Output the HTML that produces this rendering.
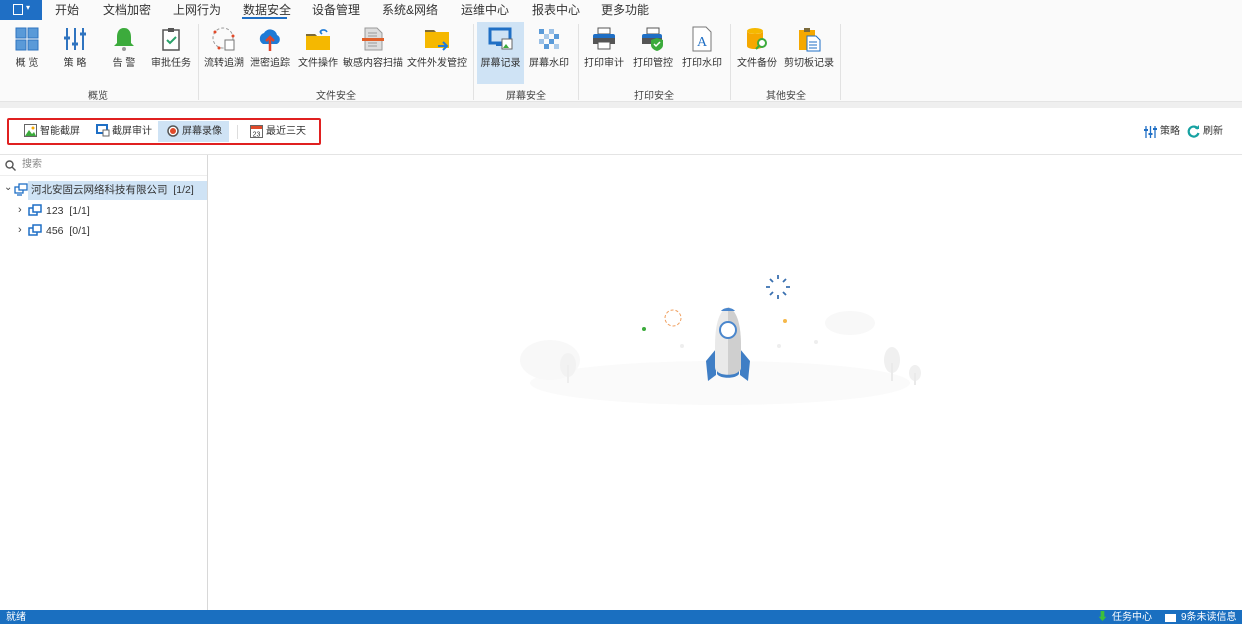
<!DOCTYPE html><html><head><meta charset="utf-8"><style>
*{margin:0;padding:0;box-sizing:border-box}
body{width:1242px;height:624px;overflow:hidden;background:#fff;font-family:"Liberation Sans","Noto Sans CJK SC",sans-serif;font-size:12px;line-height:1.2;color:#333;position:relative}
.a{position:absolute}
.tab{position:absolute;top:3px;font-size:12px;color:#333}
.it{position:absolute;top:22px;height:62px;text-align:center;font-size:10px;color:#333}
.it .ic{position:absolute;top:4px;left:50%;margin-left:-13px;width:26px;height:26px}
.it span{position:absolute;top:36px;left:0;right:0;white-space:nowrap}
.gl{position:absolute;top:91px;font-size:10px;line-height:12px;color:#444;z-index:2}
.sep{position:absolute;top:24px;width:1px;height:76px;background:#e2e2e2}
.tb{position:absolute;top:123px;font-size:10px;color:#333;height:18px;line-height:18px}
</style></head><body>
<div class="a" style="left:0;top:0;width:1242px;height:101px;background:#fafafa"></div>
<div class="a" style="left:0;top:0;width:42px;height:20px;background:#1f6fc5"></div>
<div class="a" style="left:13px;top:4px;width:10px;height:11px;border:1.5px solid #fff"></div>
<div class="a" style="left:26px;top:3px;color:#fff;font-size:8px">▾</div>
<div class="tab" style="left:55px">开始</div><div class="tab" style="left:103px">文档加密</div><div class="tab" style="left:173px">上网行为</div>
<div class="tab" style="left:243px">数据安全</div><div class="a" style="left:242px;top:17px;width:45px;height:2px;background:#1f6fc5"></div>
<div class="tab" style="left:312px">设备管理</div><div class="tab" style="left:382px">系统&amp;网络</div><div class="tab" style="left:461px">运维中心</div><div class="tab" style="left:532px">报表中心</div><div class="tab" style="left:601px">更多功能</div>
<div class="a" style="left:477px;top:22px;width:47px;height:62px;background:#cfe3f5"></div>
<div class="it" style="left:7px;width:40px"><svg class="ic" viewBox="0 0 26 26"><g fill="#5a9ad8" stroke="#2f74c0"><rect x="2" y="2" width="10" height="10"/><rect x="14" y="2" width="10" height="10"/><rect x="2" y="14" width="10" height="10"/><rect x="14" y="14" width="10" height="10"/></g></svg><span>概 览</span></div>
<div class="it" style="left:55px;width:40px"><svg class="ic" viewBox="0 0 26 26" stroke="#2f74c0" stroke-width="2"><path d="M5 2v22M13 2v22M21 2v22"/><path d="M2 12h6M10 18h6M18 8h6" stroke-width="3"/></svg><span>策 略</span></div>
<div class="it" style="left:104px;width:40px"><svg class="ic" viewBox="0 0 26 26"><path d="M13 2c-5 0-7 4-7 9v6l-3 3h20l-3-3v-6c0-5-2-9-7-9z" fill="#3cab3c"/><circle cx="13" cy="23" r="2" fill="#999"/></svg><span>告 警</span></div>
<div class="it" style="left:149px;width:44px"><svg class="ic" viewBox="0 0 26 26"><rect x="5" y="4" width="16" height="20" fill="#fff" stroke="#555" stroke-width="1.5"/><rect x="10" y="2" width="6" height="4" fill="#555"/><path d="M9 14l3 3 6-6" stroke="#2aa26a" stroke-width="2" fill="none"/></svg><span>审批任务</span></div>
<div class="sep" style="left:198px"></div>
<div class="it" style="left:202px;width:44px"><svg class="ic" viewBox="0 0 26 26"><circle cx="12" cy="12" r="10" fill="none" stroke="#999" stroke-dasharray="3 2"/><circle cx="4" cy="6" r="1.5" fill="#e04a2a"/><circle cx="22" cy="10" r="1.5" fill="#e04a2a"/><circle cx="8" cy="22" r="1.5" fill="#e04a2a"/><rect x="14" y="14" width="9" height="10" fill="#fff" stroke="#777"/></svg><span>流转追溯</span></div>
<div class="it" style="left:248px;width:44px"><svg class="ic" viewBox="0 0 26 26"><path d="M6 18a6 6 0 0 1 1-11 7 7 0 0 1 13 2 5 5 0 0 1 0 9z" fill="#1f7bd6"/><path d="M13 25V11M9 15l4-4 4 4" stroke="#e0452a" stroke-width="2.5" fill="none"/></svg><span>泄密追踪</span></div>
<div class="it" style="left:296px;width:44px"><svg class="ic" viewBox="0 0 26 26"><path d="M1 8h9l2 2h13v14H1z" fill="#f5b800"/><path d="M1 8h9l2 2H1z" fill="#7b6a3a"/><path d="M15 6a4 4 0 0 1 7 0M15 6l2-2M15 6l2 2" stroke="#1f7bd6" stroke-width="1.6" fill="none"/></svg><span>文件操作</span></div>
<div class="it" style="left:343px;width:60px"><svg class="ic" viewBox="0 0 26 26"><path d="M5 2h12l5 5v17H5z" fill="#ddd" stroke="#999"/><path d="M8 7h9M8 10h9M8 17h9M8 20h9" stroke="#999"/><rect x="2" y="12" width="22" height="3" fill="#e0602a"/></svg><span>敏感内容扫描</span></div>
<div class="it" style="left:406px;width:62px"><svg class="ic" viewBox="0 0 26 26"><path d="M1 4h9l2 2h13v16H1z" fill="#f5b800"/><path d="M1 4h9l2 2H1z" fill="#7b6a3a"/><path d="M14 20h9M19 16l4 4-4 4" stroke="#1f7bd6" stroke-width="2" fill="none"/></svg><span>文件外发管控</span></div>
<div class="sep" style="left:473px"></div>
<div class="it" style="left:477px;width:47px"><svg class="ic" viewBox="0 0 26 26"><rect x="2" y="3" width="20" height="14" fill="none" stroke="#1f6fc5" stroke-width="3"/><rect x="8" y="17" width="6" height="3" fill="#1f6fc5"/><rect x="14" y="13" width="10" height="10" fill="#fff" stroke="#666"/><path d="M15 22l3-4 3 4z" fill="#3cab3c"/></svg><span>屏幕记录</span></div>
<div class="it" style="left:527px;width:44px"><svg class="ic" viewBox="0 0 26 26" fill="#5a9ad8"><rect x="3" y="3" width="5" height="5"/><rect x="13" y="3" width="5" height="5" opacity=".6"/><rect x="8" y="8" width="5" height="5" opacity=".5"/><rect x="18" y="8" width="5" height="5"/><rect x="3" y="13" width="5" height="5" opacity=".6"/><rect x="13" y="13" width="5" height="5"/><rect x="8" y="18" width="5" height="5"/><rect x="18" y="18" width="5" height="5" opacity=".5"/></svg><span>屏幕水印</span></div>
<div class="sep" style="left:578px"></div>
<div class="it" style="left:582px;width:44px"><svg class="ic" viewBox="0 0 26 26"><rect x="7" y="2" width="12" height="6" fill="#fff" stroke="#555"/><rect x="2" y="8" width="22" height="10" rx="2" fill="#1f6fc5"/><rect x="2" y="12" width="22" height="6" fill="#555"/><rect x="7" y="16" width="12" height="7" fill="#fff" stroke="#555"/></svg><span>打印审计</span></div>
<div class="it" style="left:631px;width:44px"><svg class="ic" viewBox="0 0 26 26"><rect x="7" y="2" width="12" height="6" fill="#fff" stroke="#555"/><rect x="2" y="8" width="20" height="10" rx="2" fill="#1f6fc5"/><rect x="2" y="12" width="20" height="6" fill="#555"/><path d="M17 12l6 2v5c0 3-3 5-6 6-3-1-6-3-6-6v-5z" fill="#3cab3c"/><path d="M14 18l2 2 4-4" stroke="#fff" stroke-width="1.5" fill="none"/></svg><span>打印管控</span></div>
<div class="it" style="left:680px;width:44px"><svg class="ic" viewBox="0 0 26 26"><path d="M4 1h13l5 5v19H4z" fill="#fff" stroke="#777"/><text x="13" y="20" font-size="14" text-anchor="middle" fill="#1f6fc5" font-family="Liberation Serif">A</text></svg><span>打印水印</span></div>
<div class="sep" style="left:730px"></div>
<div class="it" style="left:735px;width:44px"><svg class="ic" viewBox="0 0 26 26"><ellipse cx="11" cy="5" rx="8" ry="3" fill="#f5b800"/><path d="M3 5v15c0 2 4 3 8 3s8-1 8-3V5c0 2-4 3-8 3S3 7 3 5z" fill="#f5a800"/><circle cx="18" cy="17" r="4" fill="#fff" stroke="#3cab3c" stroke-width="2"/><path d="M15 20l-3 3" stroke="#3cab3c" stroke-width="2"/></svg><span>文件备份</span></div>
<div class="it" style="left:783px;width:52px"><svg class="ic" viewBox="0 0 26 26"><rect x="3" y="4" width="16" height="20" fill="#f5a800"/><rect x="8" y="2" width="6" height="4" fill="#7b6a3a"/><path d="M11 10h9l4 4v11H11z" fill="#fff" stroke="#1f6fc5"/><path d="M13 16h8M13 19h8M13 22h8" stroke="#1f6fc5"/></svg><span>剪切板记录</span></div>
<div class="sep" style="left:840px"></div>
<div class="gl" style="left:88px">概览</div><div class="gl" style="left:316px">文件安全</div><div class="gl" style="left:506px">屏幕安全</div><div class="gl" style="left:634px">打印安全</div><div class="gl" style="left:766px">其他安全</div>
<div class="a" style="left:0;top:101px;width:1242px;height:7px;background:#efefef;border-top:1px solid #e4e4e4"></div>
<div class="a" style="left:7px;top:118px;width:314px;height:27px;border:2px solid #e02020;border-radius:2px"></div>
<div class="a" style="left:158px;top:121px;width:71px;height:21px;background:#cfe3f5"></div>
<svg class="a" style="left:24px;top:124px" width="13" height="13" viewBox="0 0 13 13"><rect x=".5" y=".5" width="12" height="12" fill="#fff" stroke="#666"/><path d="M1 12l4-6 3 4 2-2 2 4z" fill="#3cab3c"/><circle cx="9" cy="4" r="1.5" fill="#f5a800"/></svg>
<div class="tb" style="left:40px">智能截屏</div>
<svg class="a" style="left:96px;top:124px" width="14" height="13" viewBox="0 0 14 13"><rect x="1" y="1" width="10" height="8" fill="none" stroke="#1f6fc5" stroke-width="2"/><rect x="7" y="6" width="6" height="6" fill="#fff" stroke="#666"/></svg>
<div class="tb" style="left:112px">截屏审计</div>
<svg class="a" style="left:167px;top:125px" width="12" height="12"><circle cx="6" cy="6" r="5" fill="#fff" stroke="#555" stroke-width="1.5"/><circle cx="6" cy="6" r="3" fill="#e04a2a"/></svg>
<div class="tb" style="left:182px">屏幕录像</div>
<div class="a" style="left:237px;top:125px;width:1px;height:14px;background:#ddd"></div>
<svg class="a" style="left:250px;top:124px" width="13" height="14"><rect x=".5" y="1.5" width="12" height="12" fill="#fff" stroke="#666"/><rect x="1" y="2" width="11" height="3" fill="#e04a2a"/><text x="6.5" y="12.5" font-size="7" text-anchor="middle" fill="#333">23</text></svg>
<div class="tb" style="left:266px">最近三天</div>
<svg class="a" style="left:1144px;top:125px" width="13" height="13" stroke="#1f6fc5" stroke-width="1.3"><path d="M2 1v12M6.5 1v12M11 1v12"/><path d="M0 5h4M4.5 9h4M9 4h4" stroke-width="2"/></svg>
<div class="tb" style="left:1160px">策略</div>
<svg class="a" style="left:1187px;top:125px" width="13" height="13"><path d="M11 4A5 5 0 1 0 11.5 8" fill="none" stroke="#17a2a2" stroke-width="2.2"/><path d="M8 4h4V0z" fill="#17a2a2"/></svg>
<div class="tb" style="left:1203px">刷新</div>
<div class="a" style="left:0;top:154px;width:1242px;height:1px;background:#e4e4e4"></div>
<div class="a" style="left:207px;top:155px;width:1px;height:455px;background:#d8d8d8"></div>
<svg class="a" style="left:5px;top:160px" width="11" height="11" stroke="#555" stroke-width="1.4" fill="none"><circle cx="4.5" cy="4.5" r="3.5"/><path d="M7 7l3.5 3.5"/></svg>
<div class="a" style="left:22px;top:159px;font-size:10px;color:#888">搜索</div>
<div class="a" style="left:0;top:175px;width:207px;height:1px;background:#eee"></div>
<div class="a" style="left:28px;top:181px;width:179px;height:19px;background:#cfe3f5"></div>
<div class="a" style="left:4px;top:182px;font-size:10px;color:#444">⌄</div>
<svg class="a" style="left:14px;top:183px" width="14" height="13" fill="none" stroke="#1f6fc5" stroke-width="1.3"><rect x="1" y="4" width="8" height="6"/><rect x="5" y="1" width="8" height="6" fill="#fff"/><path d="M3 12h5"/></svg>
<div class="a" style="left:31px;top:184px;font-size:10.5px;color:#333">河北安固云网络科技有限公司&nbsp; [1/2]</div>
<div class="a" style="left:18px;top:204px;font-size:11px;color:#444">›</div>
<svg class="a" style="left:28px;top:204px" width="14" height="13" fill="none" stroke="#1f6fc5" stroke-width="1.5"><rect x="1" y="4" width="8" height="7"/><rect x="5" y="1" width="8" height="7" fill="#fff"/></svg>
<div class="a" style="left:46px;top:205px;font-size:10.5px">123&nbsp; [1/1]</div>
<div class="a" style="left:18px;top:224px;font-size:11px;color:#444">›</div>
<svg class="a" style="left:28px;top:224px" width="14" height="13" fill="none" stroke="#1f6fc5" stroke-width="1.5"><rect x="1" y="4" width="8" height="7"/><rect x="5" y="1" width="8" height="7" fill="#fff"/></svg>
<div class="a" style="left:46px;top:225px;font-size:10.5px">456&nbsp; [0/1]</div>
<svg class="a" style="left:510px;top:265px" width="420" height="150" viewBox="0 0 420 150">
<ellipse cx="210" cy="118" rx="190" ry="22" fill="#fafafa"/>
<ellipse cx="40" cy="95" rx="30" ry="20" fill="#f8f8f8"/><ellipse cx="340" cy="58" rx="25" ry="12" fill="#f8f8f8"/>
<ellipse cx="58" cy="100" rx="8" ry="12" fill="#f2f2f2"/><path d="M58 100v18" stroke="#eee" stroke-width="2"/>
<ellipse cx="382" cy="95" rx="8" ry="13" fill="#f0f0f0"/><path d="M382 98v18" stroke="#eaeaea" stroke-width="2"/>
<ellipse cx="405" cy="108" rx="6" ry="8" fill="#f0f0f0"/><path d="M405 108v12" stroke="#eaeaea" stroke-width="2"/>
<circle cx="163" cy="53" r="8" fill="none" stroke="#f0a060" stroke-dasharray="3 2"/>
<circle cx="134" cy="64" r="2" fill="#3cab3c"/><circle cx="275" cy="56" r="2" fill="#f5b84a"/>
<circle cx="172" cy="81" r="2" fill="#eee"/><circle cx="269" cy="81" r="2" fill="#eee"/><circle cx="306" cy="77" r="2" fill="#eee"/>
<g stroke="#3a70b0" stroke-width="1.8" transform="translate(268,22)"><path d="M0-12v4M0 8v4M-12 0h4M8 0h4M-8-8l3 3M5 5l3 3M8-8l-3 3M-5 5l-3 3"/></g>
<path d="M206 84l-10 12 2 20 8-6zM230 84l10 12-2 20-8-6z" fill="#3f7ec5"/>
<path d="M218 42c-10 4-13 20-13 40v20c0 5 5 8 13 8s13-3 13-8V82c0-20-3-36-13-40z" fill="#e9e9e9"/>
<path d="M218 42c10 4 13 20 13 40v20c0 5-5 8-13 8z" fill="#cfcfcf"/>
<path d="M211 46c3-4 11-4 14 0z" fill="#4a86cc"/>
<circle cx="218" cy="65" r="8" fill="#fff" stroke="#4a86cc" stroke-width="2"/>
<path d="M207 106c3 5 19 5 22 0v3c-3 5-19 5-22 0z" fill="#3f7ec5"/>
</svg>
<div class="a" style="left:0;top:610px;width:1242px;height:14px;background:#1a6fc0"></div>
<div class="a" style="left:6px;top:611px;font-size:10px;color:#fff;line-height:14px">就绪</div>
<div class="a" style="left:1097px;top:610px;color:#3cc03c;font-size:11px;line-height:14px">⬇</div>
<div class="a" style="left:1112px;top:611px;font-size:10px;color:#fff;line-height:14px">任务中心</div>
<div class="a" style="left:1165px;top:614px;width:11px;height:8px;background:#fff"></div>
<div class="a" style="left:1181px;top:611px;font-size:10px;color:#fff;line-height:14px">9条未读信息</div>
</body></html>
